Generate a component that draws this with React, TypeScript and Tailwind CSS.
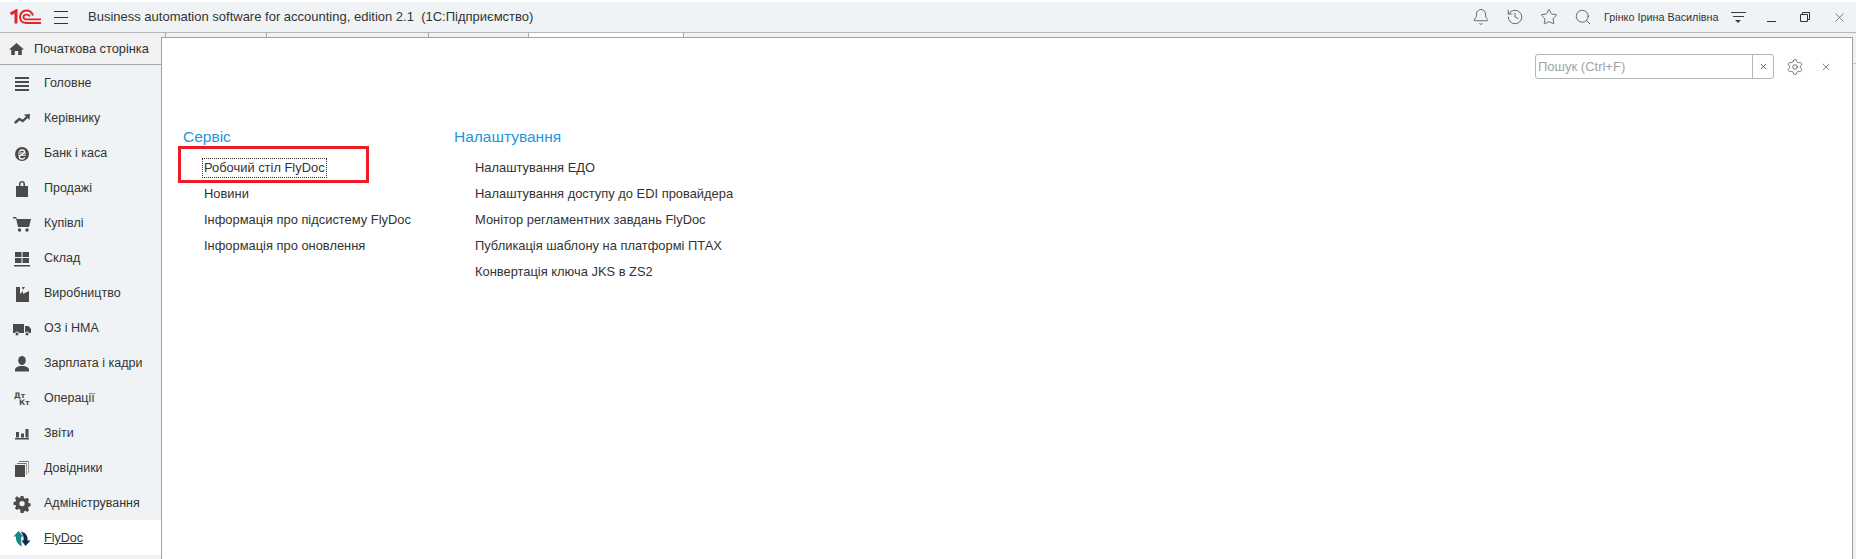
import React from "react";
import { Bell, History, Star, Search, Settings, X } from "lucide-react";

const Ic = ({ children }: { children: React.ReactNode }) => (
  <svg width="18" height="18" viewBox="0 0 18 18" fill="#4a4a4a">{children}</svg>
);

const icons: Record<string, React.ReactNode> = {
  main: <Ic><path d="M2 2h14v2H2zM2 6h14v2H2zM2 10h14v2H2zM2 14h14v2H2z" /></Ic>,
  chief: (
    <Ic>
      <path d="M1.800 13L6.300 9l3.500 2L14.500 6.500" fill="none" stroke="#4a4a4a" strokeWidth="2.400" />
      <path d="M11 4.500L17 4l-.5 6z" />
    </Ic>
  ),
  bank: (
    <Ic>
      <circle cx="9" cy="9" r="7" />
      <path d="M6.300 6.700C6.800 5.600 7.800 5 9 5c1.500 0 2.600.8 2.600 2 0 2.500-5.200 2.500-5.200 5 0 1.100 1 2 2.600 2 1.300 0 2.300-.6 2.700-1.600" fill="none" stroke="#fff" strokeWidth="1.300" />
      <path d="M5 8h8M5 10.200h8" stroke="#fff" strokeWidth="1" />
    </Ic>
  ),
  sales: <Ic><path fillRule="evenodd" d="M3 6h3V4c0-1.700 1.300-3 3-3s3 1.300 3 3v2h3v11H3zM7.500 6h3V4c0-.8-.7-1.500-1.500-1.500S7.500 3.200 7.500 4z" /></Ic>,
  buy: <Ic><path d="M0 2h3l1 2h14l-2 8H5L3 3.500H0z" /><circle cx="6.500" cy="15" r="1.700" /><circle cx="14" cy="15" r="1.700" /></Ic>,
  stock: <Ic><path d="M2 2h6.500v5H2zM9.500 2H16v5H9.500zM2 8h6.500v5H2zM9.500 8H16v5H9.500zM1 15h16v1.500H1z" /></Ic>,
  prod: <Ic><path d="M3 2h4v7l3-3v3l6-3v11H3z" /><path d="M9 2h3l-2 3z" /></Ic>,
  truck: <Ic><path d="M0 4h11v9H0zM12 6h3.500L18 9v4h-6z" /><circle cx="4" cy="14" r="2" stroke="#eff3f6" /><circle cx="14" cy="14" r="2" stroke="#eff3f6" /></Ic>,
  person: <Ic><ellipse cx="9" cy="5.500" rx="3.800" ry="4.500" /><path d="M2 16.500v-2c0-2 2.500-3 5-3.500h4c2.500.5 5 1.500 5 3.500v2z" /></Ic>,
  bars: <Ic><path d="M3 7h3v5.500H3zM8 8.500h3v4H8zM12.500 4h3v8.500h-3zM2 13h14v1.500H2z" /></Ic>,
  books: <Ic><path d="M2 5h10v12H2z" /><path d="M4 3h9.500v12H13V3.700H4zM6 1h9.500v12H15V1.700H6z" /></Ic>,
  gear: (
    <Ic>
      <path fillRule="evenodd" d="M7.500 1h3l.5 2.300 1.500.7 2-1.200 2 2.100-1.200 2 .6 1.500 2.100.5v3l-2.100.5-.6 1.500 1.200 2-2 2-2-1.200-1.500.6-.5 2.200h-3L7 15.300l-1.500-.6-2 1.200-2-2 1.200-2-.6-1.500L0 10.400v-3l2.100-.5.6-1.500-1.200-2 2-2.100 2 1.200L7 3.300zM9 6.200a2.800 2.800 0 100 5.600 2.800 2.800 0 000-5.600z" transform="translate(.5 0) scale(.95)" />
    </Ic>
  ),
  fly: (
    <svg width="18" height="18" viewBox="0 0 18 18">
      <path d="M5.500 1L.5 6.500H3C2.500 10 4 14 9 16.500 8 13 8 9.500 8.500 6.500H10.500z" fill="#128a8a" />
      <path d="M7.500 1.500C13 2.500 15 6 14.500 10.500h3L12.500 16 8.500 10.500h2C11 7 10 4 7.500 1.500z" fill="#13294b" />
    </svg>
  ),
};

const nav: [string, string][] = [
  ["main", "Головне"],
  ["chief", "Керівнику"],
  ["bank", "Банк і каса"],
  ["sales", "Продажі"],
  ["buy", "Купівлі"],
  ["stock", "Склад"],
  ["prod", "Виробництво"],
  ["truck", "ОЗ і НМА"],
  ["person", "Зарплата і кадри"],
  ["ops", "Операції"],
  ["bars", "Звіти"],
  ["books", "Довідники"],
  ["gear", "Адміністрування"],
  ["fly", "FlyDoc"],
];

const NavRow = ({ id, label }: { id: string; label: string }) => {
  const active = id === "fly";
  return (
    <div className={active ? "flex h-[35px] items-center bg-white pl-[13px] pt-[2px]" : "flex h-[35px] items-center pl-[13px] pt-[2px]"}>
      <span className="flex w-[31px] shrink-0 items-center">
        {id === "ops" ? (
          <span className="flex w-[18px] flex-col font-['DejaVu_Sans',sans-serif] text-[7.500px] font-bold leading-[7px] text-[#4a4a4a]">
            <span className="pl-[1px]">Дт</span>
            <span className="pl-[6px]">Кт</span>
          </span>
        ) : (
          icons[id]
        )}
      </span>
      <span className={active ? "whitespace-nowrap text-[12.5px] text-[#333] underline" : "whitespace-nowrap text-[12.5px] text-[#333]"}>{label}</span>
    </div>
  );
};

const col1 = ["Робочий стіл FlyDoc", "Новини", "Інформація про підсистему FlyDoc", "Інформація про оновлення"];
const col2 = [
  "Налаштування ЕДО",
  "Налаштування доступу до EDI провайдера",
  "Монітор регламентних завдань FlyDoc",
  "Публикація шаблону на платформі ПТАХ",
  "Конвертація ключа JKS в ZS2",
];

const HeadIcon = ({ children }: { children: React.ReactNode }) => (
  <span className="flex h-[30px] w-[34px] shrink-0 items-center justify-center text-[#3d3d3d]">{children}</span>
);

export default function App() {
  return (
    <div className="flex h-[559px] w-[1856px] flex-col overflow-hidden bg-white font-['Liberation_Sans',Arial,sans-serif] text-[13px] text-[#333]">
      {/* top bar */}
      <div className="mt-[2px] flex h-[31px] shrink-0 items-center border-b border-[#b4b8ba] bg-[#eff3f6]">
        <span className="ml-[10px] flex w-[44px] shrink-0">
          <svg width="31" height="16" viewBox="0 0 31 16" fill="none" stroke="#e1252b">
            <path d="M.5 5L6 2v12.500" strokeWidth="3" />
            <path d="M23 6.500C22 3.500 19.500 1.500 16.500 1.500 12.500 1.500 10 4.500 10 8s2.500 6 6.500 6H31" strokeWidth="2" />
            <path d="M20 7.500c-.5-1-1.800-1.800-3.300-1.800-2 0-3.200 1-3.200 2.300s1.200 2.400 3.200 2.400H31" strokeWidth="1.800" />
          </svg>
        </span>
        <span className="flex w-[34px] shrink-0 flex-col gap-[5px]">
          <span className="h-px w-[14px] bg-[#333]" />
          <span className="h-px w-[14px] bg-[#333]" />
          <span className="h-px w-[14px] bg-[#333]" />
        </span>
        <span className="whitespace-pre text-[13px]">Business automation software for accounting, edition 2.1  (1С:Підприємство)</span>
        <div className="ml-auto flex items-center">
          <HeadIcon><Bell size={18} strokeWidth={1} /></HeadIcon>
          <HeadIcon><History size={18} strokeWidth={1} /></HeadIcon>
          <HeadIcon><Star size={18} strokeWidth={1} /></HeadIcon>
          <HeadIcon><Search size={18} strokeWidth={1} /></HeadIcon>
          <span className="ml-[4px] w-[120px] whitespace-nowrap text-[10.8px] text-[#333]">Грінко Ірина Василівна</span>
          <span className="flex h-[30px] w-[30px] shrink-0 flex-col items-center justify-center gap-[3px] pr-[2px]">
            <span className="h-px w-[15px] bg-[#3d3d3d]" />
            <span className="h-px w-[11px] bg-[#3d3d3d]" />
            <span className="h-0 w-0 border-x-[3px] border-t-[3px] border-x-transparent border-t-[#3d3d3d]" />
          </span>
          <HeadIcon><span className="mt-[8px] h-px w-[9px] bg-[#333]" /></HeadIcon>
          <HeadIcon>
            <svg width="10" height="10" viewBox="0 0 10 10" fill="none" stroke="#333">
              <path d="M.5 2.500h7v7h-7zM2.500 2.500v-2h7v7h-2" />
            </svg>
          </HeadIcon>
          <HeadIcon><X size={15} strokeWidth={1} /></HeadIcon>
        </div>
      </div>

      <div className="flex min-h-0 flex-1">
        {/* sidebar */}
        <aside className="flex w-[161px] shrink-0 flex-col bg-[#eff3f6]">
          <div className="flex h-[32px] shrink-0 items-center border-b border-[#a8a8a8] bg-[#f1f1f1] pl-[9px]">
            <svg className="mr-[10px] shrink-0" width="15" height="14" viewBox="0 0 15 14" fill="#4a4a4a">
              <path d="M7.500 1L0 7.500h2.200V13h3.600V9h3.400v4h3.600V7.500H15z" />
            </svg>
            <span className="whitespace-nowrap text-[12.8px]">Початкова сторінка</span>
          </div>
          {nav.map(([id, label]) => (
            <NavRow key={id} id={id} label={label} />
          ))}
        </aside>

        {/* work area */}
        <div className="flex min-w-0 flex-1 flex-col bg-[#f1f1f1]">
          <div className="flex h-[4px] shrink-0">
            <div className="w-[4px] shrink-0" />
            <div className="w-[101px] shrink-0 border-l border-[#a8a8a8]" />
            <div className="w-[162px] shrink-0 border-l border-[#a8a8a8]" />
            <div className="w-[100px] shrink-0 border-l border-[#a8a8a8]" />
            <div className="w-[155px] shrink-0 border-l border-[#a8a8a8] bg-white" />
            <div className="flex-1 border-l border-[#a8a8a8]" />
          </div>
          <div className="flex min-h-0 flex-1">
            <main className="relative min-h-0 flex-1 border-l border-r border-t border-[#a0a0a0] bg-white">
              {/* search row */}
              <div className="flex h-[41px] items-end justify-end">
                <div className="flex h-[25px] w-[239px] items-stretch rounded-[3px] border border-[#b5b5b5]">
                  <span className="flex flex-1 items-center pl-[2px] text-[13px] text-[#a3a3a3]">Пошук (Ctrl+F)</span>
                  <span className="flex w-[21px] items-center justify-center border-l border-[#b5b5b5]"><X size={9} strokeWidth={2} color="#333" /></span>
                </div>
                <span className="flex h-[25px] w-[42px] items-center justify-center text-[#444]"><Settings size={18} strokeWidth={1} /></span>
                <span className="flex h-[25px] w-[20px] items-center justify-center text-[#333]"><X size={12} strokeWidth={1.200} /></span>
                <span className="w-[16px]" />
              </div>

              {/* columns */}
              <div className="flex pl-[21px] pt-[45px]">
                <section className="w-[271px] shrink-0">
                  <h2 className="h-[26px] text-[15.500px] leading-[26px] text-[#1b97dd]">Сервіс</h2>
                  <ul className="mt-[5px] pl-[21px] text-[12.9px]">
                    {col1.map((t, i) => (
                      <li key={t} className="flex h-[26px] items-center">
                        <span className={i === 0 ? "-ml-[1px] pl-[1px] pr-[1px] leading-[18px] outline-1 outline-dotted outline-[#333]" : ""}>{t}</span>
                      </li>
                    ))}
                  </ul>
                </section>
                <section>
                  <h2 className="h-[26px] text-[15.500px] leading-[26px] text-[#1b97dd]">Налаштування</h2>
                  <ul className="mt-[5px] pl-[21px] text-[12.9px]">
                    {col2.map((t) => (
                      <li key={t} className="flex h-[26px] items-center">{t}</li>
                    ))}
                  </ul>
                </section>
              </div>

              {/* annotation */}
              <div className="absolute left-[16px] top-[108px] h-[37px] w-[191px] border-[3px] border-[#ed1c24]" />
            </main>
            <div className="w-[3px] shrink-0">
              <div className="mt-[26px] h-px bg-[#c4c4c4]" />
            </div>
          </div>
        </div>
      </div>
    </div>
  );
}
